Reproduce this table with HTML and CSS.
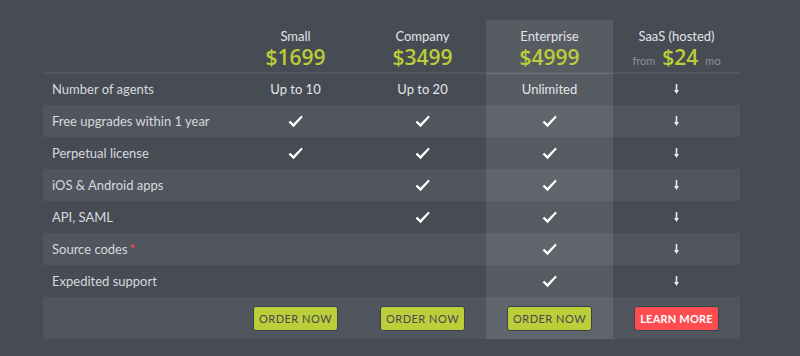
FILE: index.html
```html
<!DOCTYPE html>
<html>
<head>
<meta charset="utf-8">
<link rel="stylesheet" href="styles.css">
</head>
<body>
<div class="pricing">
  <div class="row head">
    <div class="cell label"></div>
    <div class="cell plan"><div class="name">Small</div><div class="price">$1699</div></div>
    <div class="cell plan"><div class="name">Company</div><div class="price">$3499</div></div>
    <div class="cell plan hl"><div class="name">Enterprise</div><div class="price">$4999</div></div>
    <div class="cell plan"><div class="name">SaaS (hosted)</div><div class="price"><span class="unit">from</span>$24<span class="unit">mo</span></div></div>
  </div>
  <div class="row">
    <div class="cell label">Number of agents</div>
    <div class="cell val">Up to 10</div>
    <div class="cell val">Up to 20</div>
    <div class="cell val hl">Unlimited</div>
    <div class="cell val"><svg class="arr" viewBox="0 0 5 10" width="5" height="10"><rect x="1.7" y="0" width="1.6" height="6.5"/><polygon points="0,6 5,6 2.5,10"/></svg></div>
  </div>
  <div class="row alt">
    <div class="cell label">Free upgrades within 1 year</div>
    <div class="cell val"><svg class="chk" viewBox="0 0 14 12" width="15" height="13"><path d="M0.5 6.6 L2.2 5.2 L5 8 L12.6 0.4 L13.8 1.7 L5.2 11.4 Z"/></svg></div>
    <div class="cell val"><svg class="chk" viewBox="0 0 14 12" width="15" height="13"><path d="M0.5 6.6 L2.2 5.2 L5 8 L12.6 0.4 L13.8 1.7 L5.2 11.4 Z"/></svg></div>
    <div class="cell val hl"><svg class="chk" viewBox="0 0 14 12" width="15" height="13"><path d="M0.5 6.6 L2.2 5.2 L5 8 L12.6 0.4 L13.8 1.7 L5.2 11.4 Z"/></svg></div>
    <div class="cell val"><svg class="arr" viewBox="0 0 5 10" width="5" height="10"><rect x="1.7" y="0" width="1.6" height="6.5"/><polygon points="0,6 5,6 2.5,10"/></svg></div>
  </div>
  <div class="row">
    <div class="cell label">Perpetual license</div>
    <div class="cell val"><svg class="chk" viewBox="0 0 14 12" width="15" height="13"><path d="M0.5 6.6 L2.2 5.2 L5 8 L12.6 0.4 L13.8 1.7 L5.2 11.4 Z"/></svg></div>
    <div class="cell val"><svg class="chk" viewBox="0 0 14 12" width="15" height="13"><path d="M0.5 6.6 L2.2 5.2 L5 8 L12.6 0.4 L13.8 1.7 L5.2 11.4 Z"/></svg></div>
    <div class="cell val hl"><svg class="chk" viewBox="0 0 14 12" width="15" height="13"><path d="M0.5 6.6 L2.2 5.2 L5 8 L12.6 0.4 L13.8 1.7 L5.2 11.4 Z"/></svg></div>
    <div class="cell val"><svg class="arr" viewBox="0 0 5 10" width="5" height="10"><rect x="1.7" y="0" width="1.6" height="6.5"/><polygon points="0,6 5,6 2.5,10"/></svg></div>
  </div>
  <div class="row alt">
    <div class="cell label">iOS &amp; Android apps</div>
    <div class="cell val"></div>
    <div class="cell val"><svg class="chk" viewBox="0 0 14 12" width="15" height="13"><path d="M0.5 6.6 L2.2 5.2 L5 8 L12.6 0.4 L13.8 1.7 L5.2 11.4 Z"/></svg></div>
    <div class="cell val hl"><svg class="chk" viewBox="0 0 14 12" width="15" height="13"><path d="M0.5 6.6 L2.2 5.2 L5 8 L12.6 0.4 L13.8 1.7 L5.2 11.4 Z"/></svg></div>
    <div class="cell val"><svg class="arr" viewBox="0 0 5 10" width="5" height="10"><rect x="1.7" y="0" width="1.6" height="6.5"/><polygon points="0,6 5,6 2.5,10"/></svg></div>
  </div>
  <div class="row">
    <div class="cell label">API, SAML</div>
    <div class="cell val"></div>
    <div class="cell val"><svg class="chk" viewBox="0 0 14 12" width="15" height="13"><path d="M0.5 6.6 L2.2 5.2 L5 8 L12.6 0.4 L13.8 1.7 L5.2 11.4 Z"/></svg></div>
    <div class="cell val hl"><svg class="chk" viewBox="0 0 14 12" width="15" height="13"><path d="M0.5 6.6 L2.2 5.2 L5 8 L12.6 0.4 L13.8 1.7 L5.2 11.4 Z"/></svg></div>
    <div class="cell val"><svg class="arr" viewBox="0 0 5 10" width="5" height="10"><rect x="1.7" y="0" width="1.6" height="6.5"/><polygon points="0,6 5,6 2.5,10"/></svg></div>
  </div>
  <div class="row alt">
    <div class="cell label">Source codes <span class="star">*</span></div>
    <div class="cell val"></div>
    <div class="cell val"></div>
    <div class="cell val hl"><svg class="chk" viewBox="0 0 14 12" width="15" height="13"><path d="M0.5 6.6 L2.2 5.2 L5 8 L12.6 0.4 L13.8 1.7 L5.2 11.4 Z"/></svg></div>
    <div class="cell val"><svg class="arr" viewBox="0 0 5 10" width="5" height="10"><rect x="1.7" y="0" width="1.6" height="6.5"/><polygon points="0,6 5,6 2.5,10"/></svg></div>
  </div>
  <div class="row">
    <div class="cell label">Expedited support</div>
    <div class="cell val"></div>
    <div class="cell val"></div>
    <div class="cell val hl"><svg class="chk" viewBox="0 0 14 12" width="15" height="13"><path d="M0.5 6.6 L2.2 5.2 L5 8 L12.6 0.4 L13.8 1.7 L5.2 11.4 Z"/></svg></div>
    <div class="cell val"><svg class="arr" viewBox="0 0 5 10" width="5" height="10"><rect x="1.7" y="0" width="1.6" height="6.5"/><polygon points="0,6 5,6 2.5,10"/></svg></div>
  </div>
  <div class="row alt foot">
    <div class="cell label"></div>
    <div class="cell val"><a class="btn">Order now</a></div>
    <div class="cell val"><a class="btn">Order now</a></div>
    <div class="cell val hl"><a class="btn">Order now</a></div>
    <div class="cell val"><a class="btn red">Learn more</a></div>
  </div>
</div>
</body>
</html>
```

FILE: styles.css
```css
html, body {
  margin: 0;
  padding: 0;
  background: #474b53;
  height: 100%;
}
body {
  font-family: Lato, "Liberation Sans", sans-serif;
  color: #dfe1e5;
  font-size: 13px;
}
.pricing {
  margin-left: 43px;
  width: 697px;
}
.row {
  display: grid;
  grid-template-columns: 189px 127px 127px 127px 127px;
  height: 32px;
}
.row.alt {
  background: #51555d;
}
.row.head {
  height: 73px;
}
.row.foot {
  height: 42px;
}
.cell {
  display: flex;
  align-items: center;
}
.label {
  padding-left: 9px;
  color: #d6d9de;
}
.val {
  justify-content: center;
  color: #e4e6ea;
}
.hl {
  background: rgba(255, 255, 255, 0.09);
}
.head .cell {
  margin-top: 20px;
  border-bottom: 2px solid rgba(255, 255, 255, 0.06);
}
.head .plan {
  flex-direction: column;
  align-items: center;
  justify-content: flex-start;
  padding-top: 9px;
}
.name {
  font-size: 13px;
  line-height: 15px;
  color: #e2e4e8;
}
.price {
  font-family: "Open Sans", Lato, sans-serif;
  font-size: 21px;
  font-weight: 600;
  line-height: 22px;
  margin-top: 2px;
  color: #bacd38;
  display: flex;
  align-items: baseline;
}
.unit {
  font-family: Lato, sans-serif;
  font-size: 11px;
  font-weight: 400;
  color: #8c9098;
  margin: 0 7px;
}
.star {
  color: #ff5157;
  margin-left: 2px;
}
.chk {
  fill: #ffffff;
  display: block;
}
.arr {
  fill: #e8eaee;
  display: block;
}
.btn {
  display: flex;
  align-items: center;
  justify-content: center;
  box-sizing: border-box;
  width: 85px;
  height: 25px;
  margin-top: 1px;
  border: 1px solid #3b3f4f;
  border-radius: 3px;
  background: #bccf3a;
  color: #464a52;
  font-size: 11px;
  font-weight: 400;
  text-transform: uppercase;
  letter-spacing: 0.5px;
}
.btn.red {
  background: #fe4c50;
  color: #ffffff;
  font-weight: 700;
  letter-spacing: 0.2px;
  border-color: #2f4a55;
}
```
